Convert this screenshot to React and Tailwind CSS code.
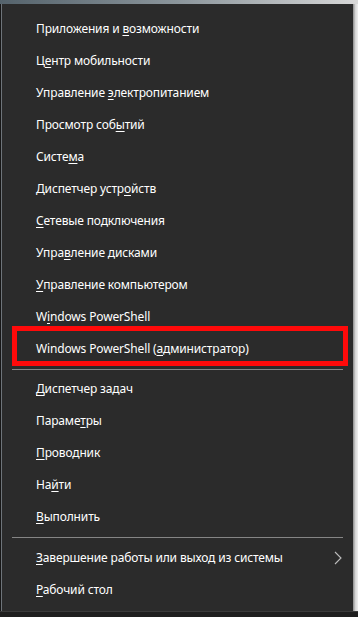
import React from "react";

const groups = [
  [
    ["Приложения и ", "в", "озможности"],
    ["Ц", "е", "нтр мобильности"],
    ["Управление ", "э", "лектропитанием"],
    ["Просмотр соб", "ы", "тий"],
    ["Систе", "м", "а"],
    ["Диспетчер устр", "о", "йств"],
    ["", "С", "етевые подключения"],
    ["Упра", "в", "ление дисками"],
    ["", "У", "правление компьютером"],
    ["W", "i", "ndows PowerShell"],
    ["Windows PowerShell (", "а", "дминистратор)", "boxed"],
  ],
  [
    ["", "Д", "испетчер задач"],
    ["Параме", "т", "ры"],
    ["", "П", "роводник"],
    ["На", "й", "ти"],
    ["", "В", "ыполнить"],
  ],
  [
    ["", "З", "авершение работы или выход из системы", "arrow"],
    ["", "Р", "абочий стол"],
  ],
];

const Row = ({ item }) => {
  const [before, key, after, extra] = item;
  return (
    <div className="relative flex h-[32px] items-center justify-between pl-[34px] pr-[11px]">
      <span>
        {before}
        <span className="underline underline-offset-[2px] decoration-1">{key}</span>
        {after}
      </span>
      {extra === "arrow" && (
        <svg width="8" height="14" viewBox="0 0 8 14" className="text-[#bdbdbd]">
          <path d="M1 1l6 6-6 6" fill="none" stroke="currentColor" strokeWidth="1.1" />
        </svg>
      )}
      {extra === "boxed" && (
        <div className="absolute left-[10px] right-[5px] top-[-7px] bottom-[-1px] border-[5px] border-[#ff0a0a]" />
      )}
    </div>
  );
};

export default function App() {
  return (
    <div
      className="flex h-[617px] w-[358px] flex-col overflow-hidden bg-[#1c1c1c] text-[12px] tracking-[-0.15px] text-white"
      style={{ fontFamily: '"Noto Sans", "Open Sans", sans-serif' }}
    >
      <div className="h-[4px] shrink-0 bg-gradient-to-r from-[#55636c] via-[#8c969c] to-[#d8d8d8]" />
      <div className="flex flex-1">
        <div className="w-[2px] border-l border-[#161616] bg-[#6e747a]" />
        <div className="flex flex-1 flex-col bg-[#2b2b2b] pt-[9px]">
          {groups.map((g, gi) => (
            <div key={gi}>
              {gi > 0 && (
                <div className={gi === 1 ? "pt-[4px] pb-[3px]" : "pt-[4px] pb-[4px]"}>
                  <div className="ml-[10px] mr-[10px] h-px bg-[#858585]" />
                </div>
              )}
              {g.map((item, i) => (
                <Row key={i} item={item} />
              ))}
            </div>
          ))}
        </div>
        <div className="w-[5px] bg-gradient-to-r from-[#8d8d8d] via-[#d6d6d6] to-[#efefef]" />
      </div>
      <div className="h-[6px] shrink-0 border-t border-[#3a3a3a] bg-[#1e1e1e]" />
    </div>
  );
}
